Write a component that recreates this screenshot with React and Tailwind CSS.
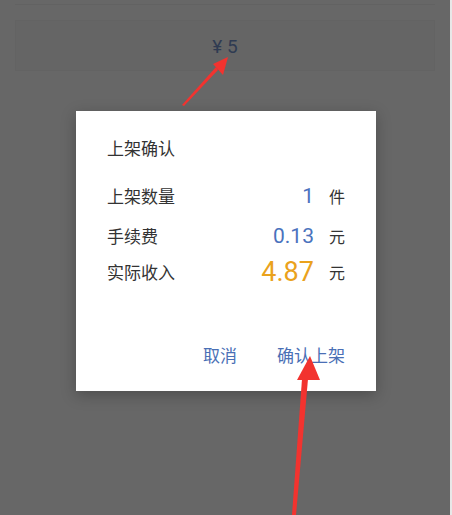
import React from "react";

const num = { fontFamily: 'Roboto, "Liberation Sans", sans-serif' };

const Row = ({ label, value, unit, valueClass, className }) => (
  <div className={"flex items-center justify-between " + className}>
    <span className="text-[17px] text-[#333]">{label}</span>
    <div className="flex items-center">
      <span className={valueClass} style={num}>{value}</span>
      <span className="ml-[15px] text-[16px] leading-[24px] text-[#333]">{unit}</span>
    </div>
  </div>
);

const App = () => {
  return (
    <div
      className="relative w-[452px] h-[515px] overflow-hidden bg-[#676767] border-r-2 border-r-[#e8e8e8]"
      style={{ fontFamily: '"Noto Sans CJK SC", Roboto, "Liberation Sans", sans-serif' }}
    >
      {/* page under the mask */}
      <div className="mx-[15px] h-[5px] border-b border-[#626262]" />
      <div className="mx-[15px] mt-[15px] h-[51px] bg-[#656565] border border-[#636363] flex items-center justify-center pt-[3px]">
        <span className="text-[19px] text-[#2f3b52]" style={num}>¥ 5</span>
      </div>

      {/* dialog */}
      <div className="ml-[76px] mt-[40px] w-[300px] h-[280px] bg-white shadow-[0_4px_14px_rgba(0,0,0,0.25)] px-[31px] pt-[24px] flex flex-col">
        <div className="text-[17px] text-[#333] leading-[26px]">上架确认</div>
        <Row className="mt-[22px]" label="上架数量" value="1" unit="件" valueClass="text-[21px] leading-[26px] text-[#4a72bd]" />
        <Row className="mt-[14px]" label="手续费" value="0.13" unit="元" valueClass="text-[21px] leading-[26px] text-[#4a72bd]" />
        <Row className="mt-[8px]" label="实际收入" value="4.87" unit="元" valueClass="text-[27px] leading-[30px] text-[#eaa21c]" />
        <div className="mt-auto mb-[24px] flex justify-end gap-[40px] text-[17px] text-[#4a6fb5]">
          <span>取消</span>
          <span>确认上架</span>
        </div>
      </div>

      {/* annotation arrows */}
      <svg className="absolute inset-0 pointer-events-none" width="452" height="515" viewBox="0 0 452 515">
        <polygon points="182,105 184,106 218,70 216,67" fill="#f2332f" />
        <polygon points="228,57 213,64 223,75" fill="#f2332f" />
        <polygon points="292,515 296,515 308,379 302,379" fill="#f2332f" />
        <polygon points="310,356 297,380 320,380" fill="#f2332f" />
      </svg>
    </div>
  );
};

export default App;
